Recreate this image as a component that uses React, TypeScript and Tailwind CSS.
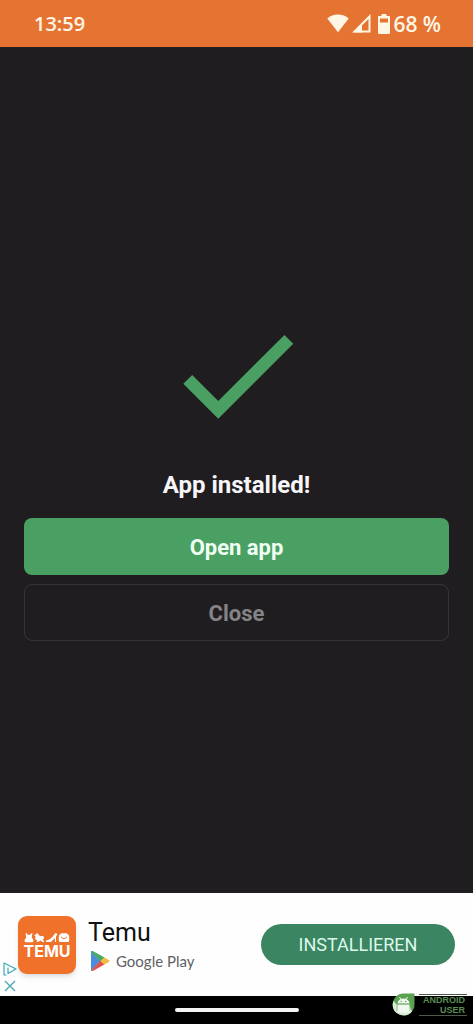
function StatusBar() {
  return (
    <header className="flex h-[47px] shrink-0 items-center justify-between bg-[#e57433] pr-8 pl-[34px] text-[#fff6e6]">
      <time className="font-['Open_Sans',sans-serif] text-[20px] leading-6 font-semibold">13:59</time>
      <div className="flex items-center gap-[3px]">
        <svg className="h-[19px] w-[22px]" viewBox="0 0 22 19" fill="currentColor" aria-hidden="true">
          <path d="M11 0.500C6.800 0.500 3.100 2 0.300 4.600L11 18.300 21.700 4.600C18.900 2 15.200 0.500 11 0.500z" />
        </svg>
        <svg className="h-[19px] w-[19px]" viewBox="0 0 19 19" fill="none" stroke="currentColor" aria-hidden="true">
          <path d="M17.500 2.500V17.500H2.500z" strokeWidth="2" />
          <path d="M10 9V18.400H2z" fill="currentColor" stroke="none" />
        </svg>
        <svg className="ml-1 h-5 w-3" viewBox="0 0 12 20" aria-hidden="true">
          <path
            fill="currentColor"
            fillRule="evenodd"
            d="M3.500 0h5v2H11a1 1 0 0 1 1 1v16a1 1 0 0 1-1 1H1a1 1 0 0 1-1-1V3a1 1 0 0 1 1-1h2.500zM2 4.500V8.500H10V4.500z"
          />
        </svg>
        <span className="font-['Open_Sans',sans-serif] text-[21px] leading-6 font-semibold">68 %</span>
      </div>
    </header>
  );
}

function TemuIcon() {
  return (
    <svg className="h-[58px] w-[58px] shrink-0 rounded-[9px] bg-[#f07129] shadow-md" viewBox="0 0 58 58" role="img" aria-label="Temu">
      <g fill="#fff">
        {/* dress */}
        <path d="M8.500 17l1.200 1.800h2.600l1.200-1.800 1 .5-.8 3.500 2 3.800-1.200 1.400H7.500l-1.200-1.400 2-3.800-.8-3.500z" />
        {/* rocking horse */}
        <path d="M16.300 19.500l3-2.500 2.700 3.200 3-.4 1.300 2.400-1.500 1.300 1.700 2.500h-2l-2-1.500-2.500 1.500h-1.300l.3-2-2.200-1 1-2z" />
        {/* high heel */}
        <path d="M38.300 17l1 1.500-1.300 2v5.500h-1v-4L33 25.900h-5v-1.400c3.800-.5 6.700-3.300 8.700-6.700z" />
        {/* bag */}
        <path
          fillRule="evenodd"
          d="M43.200 17.300h5.600l2.400 2.500v5a1.200 1.200 0 0 1-1.200 1.200h-8a1.200 1.200 0 0 1-1.200-1.200v-5zM42.700 20.500c.8 3.300 5.800 3.300 6.600 0l-1 .2c-.8 1.700-3.800 1.700-4.600 0z"
        />
      </g>
      <text x="29" y="41" textAnchor="middle" fill="#fff" fontSize="16" fontWeight="700" fontFamily="Inter, sans-serif">
        TEMU
      </text>
    </svg>
  );
}

function PlayLogo() {
  return (
    <svg className="h-[22px] w-5" viewBox="0 0 20 22" aria-hidden="true">
      <path fill="#4a8ddc" d="M1 1.500v19L10.500 11z" />
      <path fill="#48a865" d="M1 1.500C1.600.8 2.500.9 3.200 1.300L14.500 7.600 10.500 11.500 1 2z" />
      <path fill="#dc554b" d="M1 20.500c.6.700 1.500.6 2.200.2L14.500 14.400 10.500 10.500z" />
      <path fill="#f4b93f" d="M14.300 7.500l4.500 2.500c.9.500.9 1.500 0 2l-4.500 2.500L10.500 11z" />
    </svg>
  );
}

function AdBanner() {
  return (
    <aside className="relative flex h-[103px] shrink-0 items-center gap-3 bg-[#fefefe] px-[18px]">
      <TemuIcon />
      <div className="flex flex-1 flex-col pt-1 whitespace-nowrap">
        <span className="font-[Roboto,sans-serif] text-[25px] leading-7 text-[#111]">Temu</span>
        <span className="flex items-center gap-[6px] pl-[2px] font-[Lato,sans-serif] text-[15px] leading-7 text-[#606164]">
          <PlayLogo />
          Google Play
        </span>
      </div>
      <button className="h-[41px] w-[194px] rounded-full bg-[#3b8562] font-[Roboto,sans-serif] text-[18px] text-[#dcf8ea]">
        INSTALLIEREN
      </button>
      <div className="absolute bottom-1 left-[3px] flex flex-col gap-1">
        <a href="#adchoices" aria-label="AdChoices">
          <svg className="h-[14px] w-[14px]" viewBox="0 0 14 14" fill="none" stroke="#3ba7bb" strokeWidth="1.200">
            <path d="M3.500 13H1V1l12 6-8 4.500V5.500" strokeLinejoin="round" />
          </svg>
        </a>
        <button aria-label="Dismiss ad">
          <svg className="h-3 w-[14px]" viewBox="0 0 14 12" stroke="#4ba9b5" strokeWidth="1.400">
            <path d="M2 1l10 10M12 1L2 11" />
          </svg>
        </button>
      </div>
    </aside>
  );
}

function Watermark() {
  return (
    <div className="absolute right-[6px] bottom-2 flex items-center gap-1">
      <svg className="h-[23px] w-[23px]" viewBox="0 0 23 23" aria-hidden="true">
        <path fill="#58a250" d="M22.500 0.500V11.500A10.900 10.900 0 1 1 11.500 .5z" />
        <path fill="#dcebd9" d="M.6 11.500a10.900 10.900 0 0 0 19.500 6.700L17.500 13H6L1.500 8z" />
        <path fill="#f1f8ef" d="M5.500 10.500a6 5 0 0 1 12 0zM5.500 11.500h12V18a1.500 1.500 0 0 1-1.500 1.500H7A1.500 1.500 0 0 1 5.500 18z" />
        <path stroke="#f1f8ef" strokeWidth="1" d="M7.500 4l1.500 2.500M15.500 4L14 6.500" />
        <circle cx="9.200" cy="8.500" r=".7" fill="#58a250" />
        <circle cx="13.800" cy="8.500" r=".7" fill="#58a250" />
        <path stroke="#8cbc85" strokeWidth=".9" fill="none" d="M5.500 11h12M5 11.500v6.500M18 11.500v6.500" />
      </svg>
      <div className="flex flex-col border-y border-[#4b5a49] pr-[2px] pl-1 text-right font-['Liberation_Sans',sans-serif] text-[9px] leading-[10px] font-bold text-[#5a8d54]">
        <span>ANDROID</span>
        <span>USER</span>
      </div>
    </div>
  );
}

export default function App() {
  return (
    <div className="flex min-h-screen flex-col bg-[#1f1d20]">
      <StatusBar />

      <main className="flex flex-1 flex-col items-center justify-center px-6 font-[Roboto,sans-serif]">
        <svg className="h-[150px] w-[150px]" viewBox="0 0 24 24" fill="#4a9f62" aria-hidden="true">
          <path d="M9 16.170L4.830 12l-1.420 1.410L9 19 21 7l-1.410-1.410z" />
        </svg>
        <h1 className="mt-5 text-[24px] leading-[30px] font-bold text-[#f7f5f8]">App installed!</h1>
        <div className="mt-[18px] flex w-full flex-col gap-[9px]">
          <button className="h-[57px] rounded-lg bg-[#4a9f62] pt-[2px] text-[22px] font-bold text-[#effff3]">
            Open app
          </button>
          <button className="h-[57px] rounded-lg border border-[#343336] pt-[2px] text-[22px] font-bold text-[#858386]">
            Close
          </button>
        </div>
      </main>

      <AdBanner />

      {/* gesture bar */}
      <footer className="relative flex h-7 shrink-0 items-center justify-center bg-black">
        <div className="h-1 w-[124px] rounded-full bg-[#f4f4f4]" />
        <Watermark />
      </footer>
    </div>
  );
}
